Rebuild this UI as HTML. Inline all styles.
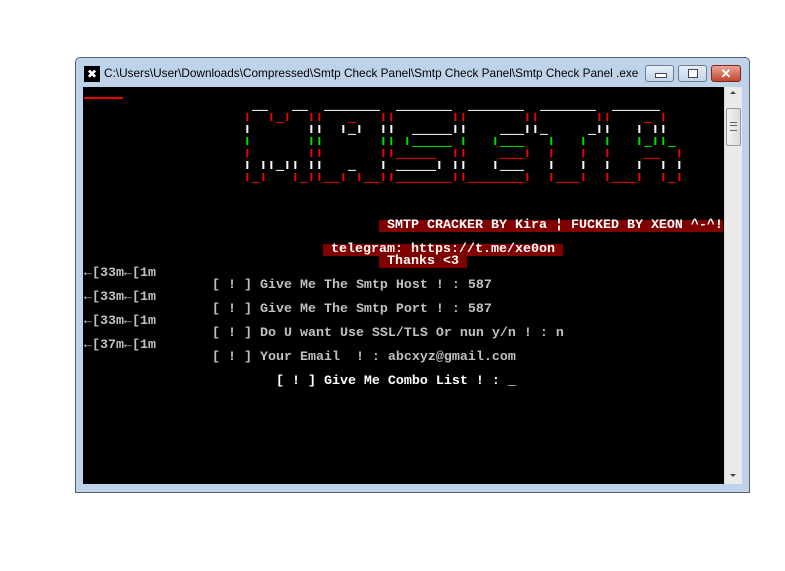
<!DOCTYPE html>
<html><head><meta charset="utf-8"><style>
body{margin:0;width:785px;height:571px;background:#fff;position:relative;overflow:hidden;font-family:"Liberation Sans",sans-serif}
.win{position:absolute;left:75px;top:57px;width:675px;height:436px;background:#bed3ea;border:1px solid #55606e;box-sizing:border-box;border-radius:5px 5px 0 0}
.title{position:absolute;left:104px;top:66px;font-size:11.8px;color:#000;white-space:nowrap}
.icon{position:absolute;left:84px;top:66px;width:16px;height:16px;background:#000;color:#fff;font-size:12px;text-align:center;line-height:16px}
.btn{position:absolute;top:65px;height:17px;border:1px solid #6d7c8f;border-radius:3px;background:linear-gradient(#e6eef8,#c5d5e9);box-sizing:border-box}
.term{position:absolute;left:83px;top:87px;width:641px;height:397px;background:#000;overflow:hidden}
.sb{position:absolute;left:724px;top:87px;width:17px;height:397px;background:#eaeaea;border-left:1px solid #ddd}
pre{margin:0;position:absolute;font-family:"Liberation Mono",monospace;font-size:13.33px;line-height:12px;white-space:pre;font-weight:bold}
.g{color:#c0c0c0}.w{color:#fff}.rb{background:#800000;color:#fff}
</style></head><body>
<div class="win"></div>
<div class="icon">✖</div>
<div class="title">C:\Users\User\Downloads\Compressed\Smtp Check Panel\Smtp Check Panel\Smtp Check Panel .exe</div>
<div class="btn" style="left:645px;width:29px"><div style="position:absolute;left:9px;top:7px;width:10px;height:3px;background:#fff;border:1px solid #445"></div></div>
<div class="btn" style="left:678px;width:29px"><div style="position:absolute;left:9px;top:3px;width:8px;height:7px;border:1px solid #445;background:#fff"></div></div>
<div class="btn" style="left:711px;width:30px;background:linear-gradient(#e8a495,#c4462f);border-color:#7a2a1e"><div style="position:absolute;left:0;width:100%;top:0;text-align:center;color:#fff;font-weight:bold;font-size:13px;line-height:15px">✕</div></div>
<div class="term">
<div style="position:absolute;left:1px;top:10px;width:39px;height:2px;background:#e00"></div>
<svg style="position:absolute;left:157px;top:13px" width="450" height="90" viewBox="0 0 1350 270">
<g stroke-width="3">
<g stroke="#fff"><path d="M36 31H84M156 31H204M252 31H420M468 31H636M684 31H852M900 31H1068M1116 31H1260"/></g>
<g stroke="#e00"><path d="M108 67H132M324 67H348M1212 67H1236"/></g>
<g stroke="#fff"><path d="M324 103H348M516 103H636M780 103H852M900 103H924M1044 103H1068"/></g>
<g stroke="#0d0"><path d="M516 139H636M780 139H852M1212 139H1236M1284 139H1308"/></g>
<g stroke="#e00"><path d="M468 175H588M780 175H852M1212 175H1260"/></g>
<g stroke="#fff"><path d="M108 211H132M324 211H348M468 211H588M780 211H852"/></g>
<g stroke="#e00"><path d="M36 247H60M180 247H204M252 247H300M372 247H420M468 247H636M684 247H852M948 247H1020M1116 247H1188M1284 247H1308"/></g>
</g>
<g stroke-width="6">
<g stroke="#e00"><path d="M22 39V63M94 39V63M142 39V63M214 39V63M238 39V63M430 39V63M454 39V63M646 39V63M670 39V63M862 39V63M886 39V63M1078 39V63M1102 39V63M1270 39V63"/></g>
<g stroke="#fff"><path d="M22 75V99M214 75V99M238 75V99M310 75V99M358 75V99M430 75V99M454 75V99M646 75V99M670 75V99M862 75V99M886 75V99M1078 75V99M1102 75V99M1198 75V99M1246 75V99M1270 75V99"/></g>
<g stroke="#0d0"><path d="M22 111V135M214 111V135M238 111V135M430 111V135M454 111V135M502 111V135M670 111V135M766 111V135M934 111V135M1030 111V135M1102 111V135M1198 111V135M1246 111V135M1270 111V135"/></g>
<g stroke="#e00"><path d="M22 147V171M214 147V171M238 147V171M430 147V171M454 147V171M646 147V171M670 147V171M862 147V171M934 147V171M1030 147V171M1102 147V171M1318 147V171"/></g>
<g stroke="#fff"><path d="M22 183V207M70 183V207M94 183V207M142 183V207M166 183V207M214 183V207M238 183V207M430 183V207M598 183V207M646 183V207M670 183V207M766 183V207M934 183V207M1030 183V207M1102 183V207M1198 183V207M1270 183V207M1318 183V207"/></g>
<g stroke="#e00"><path d="M22 219V243M70 219V243M166 219V243M214 219V243M238 219V243M310 219V243M358 219V243M430 219V243M454 219V243M646 219V243M670 219V243M862 219V243M934 219V243M1030 219V243M1102 219V243M1198 219V243M1270 219V243M1318 219V243"/></g>
</g></svg>
<pre style="left:1px;top:133px"><span style="position:absolute;left:295px" class="rb"> SMTP CRACKER BY Kira ¦ FUCKED BY XEON ^-^!</span>
</pre>
<pre style="left:1px;top:157px"><span style="position:absolute;left:239px" class="rb"> telegram: https://t.me/xe0on </span></pre>
<pre style="left:1px;top:169px"><span style="position:absolute;left:295px" class="rb"> Thanks &lt;3 </span></pre>
<pre class="g" style="left:1px;top:181px">←[33m←[1m
                [ ! ] Give Me The Smtp Host ! : 587
←[33m←[1m
                [ ! ] Give Me The Smtp Port ! : 587
←[33m←[1m
                [ ! ] Do U want Use SSL/TLS Or nun y/n ! : n
←[37m←[1m
                [ ! ] Your Email  ! : abcxyz@gmail.com
</pre>
<pre class="w" style="left:1px;top:289px">                        [ ! ] Give Me Combo List ! : _</pre>
</div>
<div class="sb">
<div style="position:absolute;left:5px;top:4px;border:3px solid transparent;border-bottom:3px solid #444;border-top:0"></div>
<div style="position:absolute;left:1px;top:21px;width:13px;height:36px;border:1px solid #999;border-radius:2px;background:linear-gradient(90deg,#f3f3f3,#dcdcdc)"><div style="position:absolute;left:3px;top:13px;width:7px;height:7px;border-top:1px solid #666;border-bottom:1px solid #666"></div><div style="position:absolute;left:3px;top:16px;width:7px;height:1px;background:#666"></div></div>
<div style="position:absolute;left:5px;top:387px;border:3px solid transparent;border-top:3px solid #444;border-bottom:0"></div>
</div>
</body></html>
